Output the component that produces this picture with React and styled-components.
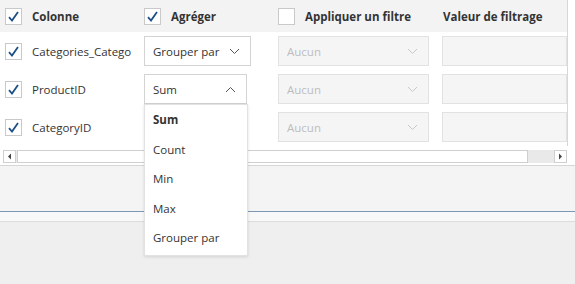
import React from "react";
import styled, { createGlobalStyle } from "styled-components";

const GlobalStyle = createGlobalStyle`
  html, body { margin: 0; padding: 0; }
  body {
    background: #efefef;
    font-family: "Open Sans", "Noto Sans", sans-serif;
    font-size: 11.5px;
    color: #333;
  }
`;

const Page = styled.div`
  width: 575px;
  height: 284px;
  display: flex;
  flex-direction: column;
  overflow: hidden;
`;

const GridPanel = styled.div`
  background: #fff;
  height: 165px;
  border-bottom: 1px solid #d6d6d6;
  display: flex;
  flex-direction: column;
  position: relative;
`;

const Table = styled.div`
  display: grid;
  grid-template-columns: 139px 139px 164px 1fr;
  grid-template-rows: 32px repeat(3, 38px);
  border-right: 1px solid #d8d8d8;
  width: 567px;
`;

const HeaderCell = styled.div`
  background: #f3f3f3;
  display: flex;
  align-items: center;
  gap: 10px;
  padding-left: ${(p) => p.$pad || 0}px;
  font-weight: 700;
  color: #333;
  white-space: nowrap;
  overflow: hidden;
`;

const Cell = styled.div`
  display: flex;
  align-items: center;
  gap: 10px;
  padding-left: ${(p) => p.$pad || 0}px;
  white-space: nowrap;
  overflow: ${(p) => (p.$clip ? "hidden" : "visible")};
  position: relative;
`;

const Box = styled.span`
  width: 17px;
  height: 17px;
  box-sizing: border-box;
  border: 1px solid #c9c9c9;
  background: #fff;
  display: inline-flex;
  align-items: center;
  justify-content: center;
  flex: none;
`;

const Check = () => (
  <svg width="13" height="13" viewBox="0 0 13 13">
    <path d="M2 7.2 L5 10.5 L11 2" fill="none" stroke="#1c4f86" strokeWidth="1.8" />
  </svg>
);

const Checkbox = ({ checked }) => <Box>{checked && <Check />}</Box>;

const Select = styled.div`
  box-sizing: border-box;
  width: ${(p) => p.$w}px;
  height: 30px;
  border: 1px solid ${(p) => (p.$disabled ? "#e2e2e2" : "#d3d3d3")};
  background: ${(p) => (p.$disabled ? "#f5f5f5" : "#fff")};
  color: ${(p) => (p.$disabled ? "#bdbdbd" : "#333")};
  display: flex;
  align-items: center;
  justify-content: space-between;
  padding: 0 10px 0 8px;
  position: relative;
`;

const Chevron = ({ up, color }) => (
  <svg width="11" height="7" viewBox="0 0 11 7">
    <path
      d={up ? "M1 6 L5.5 1.5 L10 6" : "M1 1 L5.5 5.5 L10 1"}
      fill="none"
      stroke={color}
      strokeWidth="1"
    />
  </svg>
);

const Menu = styled.div`
  position: absolute;
  top: 29px;
  left: -1px;
  width: 104px;
  box-sizing: border-box;
  background: #fff;
  border: 1px solid #e2e2e2;
  box-shadow: 0 1px 3px rgba(0, 0, 0, 0.12);
  padding: 0 0 2px;
  z-index: 5;
`;

const MenuItem = styled.div`
  height: 29.5px;
  display: flex;
  align-items: center;
  padding-left: 8px;
  font-weight: ${(p) => (p.$active ? 700 : 400)};
  color: #333;
`;

const ScrollBar = styled.div`
  margin: 4px 0 0 3px;
  width: 564px;
  height: 13px;
  display: flex;
  background: #e9e9e9;
`;

const ScrollButton = styled.div`
  width: 13px;
  height: 13px;
  box-sizing: border-box;
  border: 1px solid #d0d0d0;
  background: #fff;
  display: flex;
  align-items: center;
  justify-content: center;
  flex: none;
`;

const Thumb = styled.div`
  width: 511px;
  height: 13px;
  box-sizing: border-box;
  border: 1px solid #cfcfcf;
  background: #fff;
  margin-left: 1px;
`;

const Filler = styled.span`
  flex: 1;
`;

const Arrow = ({ right }) => (
  <svg width="5" height="7" viewBox="0 0 5 7">
    <path d={right ? "M1 0.5 L4 3.5 L1 6.5 Z" : "M4 0.5 L1 3.5 L4 6.5 Z"} fill="#444" />
  </svg>
);

const Toolbar = styled.div`
  height: 45px;
  background: #f4f4f4;
  border-bottom: 1px solid #7d97b3;
`;

const Strip = styled.div`
  height: 9px;
  background: #f8f8f8;
  border-bottom: 1px solid #dcdcdc;
`;

const rows = [
  { name: "Categories_Catego", agg: "Grouper par" },
  { name: "ProductID", agg: "Sum", open: true },
  { name: "CategoryID", agg: null },
];

const options = ["Sum", "Count", "Min", "Max", "Grouper par"];

export default function App() {
  return (
    <Page>
      <GlobalStyle />
      <GridPanel>
        <Table>
          <HeaderCell $pad={5}>
            <Checkbox checked />
            Colonne
          </HeaderCell>
          <HeaderCell $pad={5}>
            <Checkbox checked />
            Agréger
          </HeaderCell>
          <HeaderCell>
            <Checkbox />
            Appliquer un filtre
          </HeaderCell>
          <HeaderCell $pad={1}>Valeur de filtrage</HeaderCell>
          {rows.map((r) => (
            <React.Fragment key={r.name}>
              <Cell $pad={5} $clip>
                <Checkbox checked />
                {r.name}
              </Cell>
              <Cell $pad={5}>
                {r.agg && (
                  <Select $w={r.open ? 103 : 107}>
                    {r.agg}
                    <Chevron up={r.open} color="#555" />
                    {r.open && (
                      <Menu>
                        {options.map((o) => (
                          <MenuItem key={o} $active={o === r.agg}>
                            {o}
                          </MenuItem>
                        ))}
                      </Menu>
                    )}
                  </Select>
                )}
              </Cell>
              <Cell>
                <Select $w={151} $disabled>
                  Aucun
                  <Chevron color="#c8c8c8" />
                </Select>
              </Cell>
              <Cell $clip>
                <Select $w={140} $disabled />
              </Cell>
            </React.Fragment>
          ))}
        </Table>
        <ScrollBar>
          <ScrollButton>
            <Arrow />
          </ScrollButton>
          <Thumb />
          <Filler />
          <ScrollButton>
            <Arrow right />
          </ScrollButton>
        </ScrollBar>
      </GridPanel>
      <Toolbar />
      <Strip />
    </Page>
  );
}
